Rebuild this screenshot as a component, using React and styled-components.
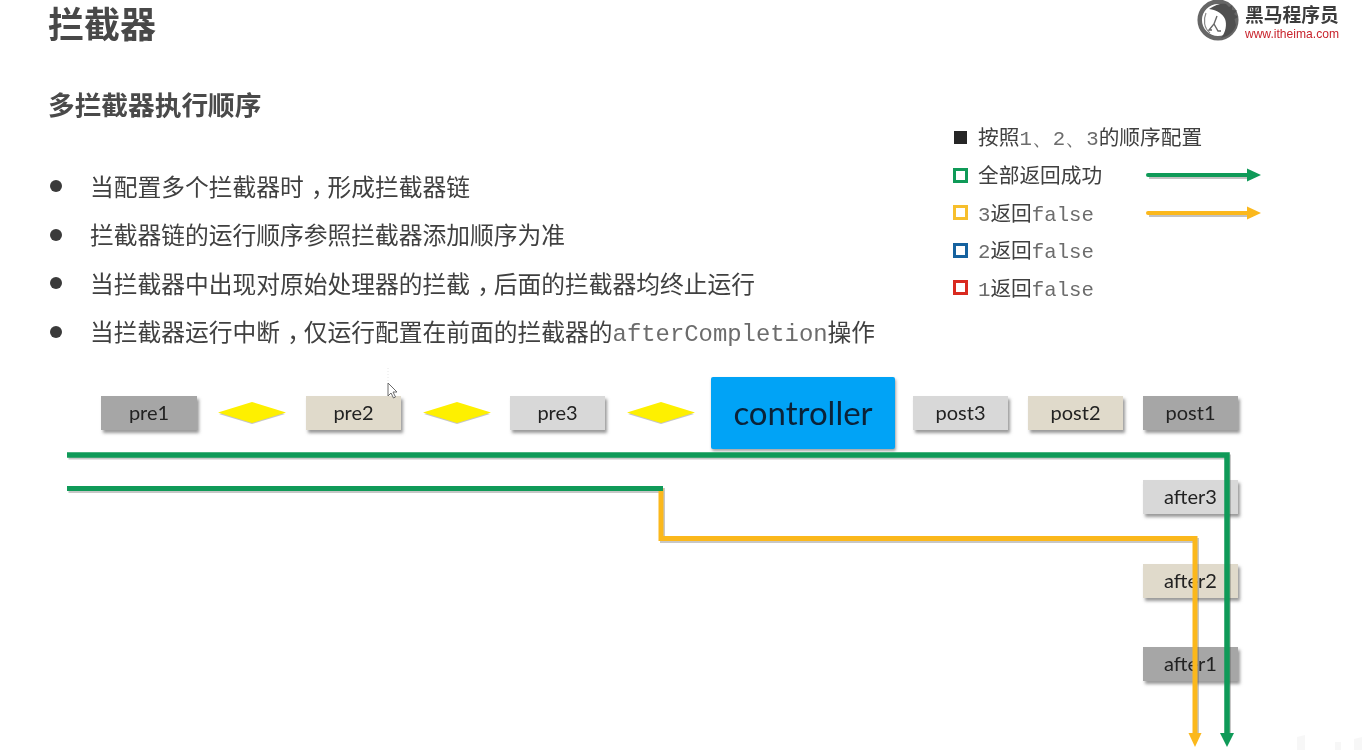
import styled, { createGlobalStyle } from 'styled-components';

const GlobalStyle = createGlobalStyle`
  html, body { margin: 0; padding: 0; background: #fff; }
`;

const CJK = `"Noto Sans CJK SC", "Noto Sans", sans-serif`;
const MONO = `"Liberation Mono", monospace`;
const GREEN = '#0f9a58';
const YELLOW = '#fbb81c';

const Slide = styled.div`
  position: relative;
  width: 1362px;
  height: 750px;
  overflow: hidden;
  background: #fff;
  font-family: ${CJK};
  color: #404040;
  filter: blur(0.45px);
`;

const Header = styled.header`
  display: flex;
  justify-content: space-between;
  align-items: flex-start;
  height: 68px;
  padding: 0 23px 0 48px;
`;

const Title = styled.h1`
  margin: 0;
  font-family: "Liberation Sans", ${CJK};
  font-size: 36px;
  line-height: 52px;
  font-weight: 700;
  color: #484848;
`;

const Logo = styled.div`
  display: flex;
  align-items: flex-start;
  gap: 4px;
  height: 41px;
`;

const LogoText = styled.div`
  display: flex;
  flex-direction: column;
  padding-top: 5px;
`;

const LogoName = styled.span`
  font-family: "Liberation Sans", ${CJK};
  font-size: 18.8px;
  font-weight: 700;
  line-height: 22px;
  color: #3c3c3c;
`;

const LogoUrl = styled.span`
  font-family: "Liberation Sans", sans-serif;
  font-size: 12.1px;
  line-height: 14px;
  color: #c8232c;
`;

const Body = styled.section`
  display: flex;
  justify-content: space-between;
  height: 309px;
  padding: 0 0 0 48px;
`;

const Intro = styled.div`
  display: flex;
  flex-direction: column;
`;

const Subtitle = styled.h2`
  margin: 0 0 27px;
  font-size: 26.7px;
  line-height: 72px;
  font-weight: 700;
  color: #4a4a4a;
`;

const List = styled.ul`
  margin: 0;
  padding: 0;
  list-style: none;
  display: flex;
  flex-direction: column;
  gap: 12.6px;
`;

const Item = styled.li`
  display: flex;
  align-items: center;
  gap: 28px;
  height: 36px;
  font-size: 23.75px;
  white-space: nowrap;
`;

const Dot = styled.i`
  width: 12px;
  height: 12px;
  margin: 2px 0 0 2px;
  border-radius: 50%;
  background: #3a3a3a;
  flex: none;
`;

const Comma = styled.span`
  font-feature-settings: "halt";
  padding: 0 0.2em 0 0.3em;
`;

const Mono = styled.span`
  font-family: ${MONO};
  color: #6c6c6c;
  font-size: ${(p) => p.$size || 23.9}px;
`;

const Legend = styled.div`
  display: flex;
  flex-direction: column;
  width: 409px;
  padding-top: 51px;
`;

const LegendRow = styled.div`
  display: flex;
  align-items: center;
  height: 37.5px;
  font-size: 20.7px;
  white-space: nowrap;
`;

const LegendMark = styled.i`
  box-sizing: border-box;
  width: 15px;
  height: 15px;
  margin-right: 10px;
  flex: none;
  background: ${(p) => (p.$solid ? p.$color : '#fff')};
  border: 3px solid ${(p) => p.$color};
  transform: ${(p) => (p.$solid ? 'scale(0.86)' : 'none')};
`;

const LegendLabel = styled.span`
  width: 168px;
  padding-bottom: 2px;
  flex: none;
`;

const Diagram = styled.section`
  position: relative;
  height: 373px;
`;

const Track = styled.div`
  display: flex;
  align-items: center;
  height: 72px;
  padding-left: 101px;
`;

const Step = styled.div`
  flex: none;
  display: flex;
  align-items: center;
  justify-content: center;
  box-sizing: border-box;
  width: ${(p) => p.$w || 95}px;
  height: 34px;
  padding-bottom: 2px;
  margin-left: ${(p) => p.$gap || 0}px;
  background: ${(p) => p.$bg};
  box-shadow: 2px 3px 3px rgba(70, 70, 70, 0.55);
  font-family: Lato, sans-serif;
  font-size: 20px;
  color: #222;
`;

const Controller = styled.div`
  flex: none;
  display: flex;
  align-items: center;
  justify-content: center;
  box-sizing: border-box;
  width: 184px;
  height: 72px;
  padding-bottom: 2px;
  margin-left: 16px;
  border-radius: 2px;
  background: #01a3f6;
  box-shadow: 1px 2px 3px rgba(70, 70, 70, 0.5);
  font-family: Lato, sans-serif;
  font-size: 33px;
  color: #0b2238;
`;

const Diamond = styled.svg`
  flex: none;
  display: block;
  margin-left: ${(p) => p.$gap}px;
  overflow: visible;
`;

const AfterStack = styled.div`
  display: flex;
  flex-direction: column;
  gap: 49.5px;
  margin: 31px 0 0 1143px;
`;

const Wires = styled.svg`
  position: absolute;
  left: 0;
  top: -377px;
  pointer-events: none;
`;

const Watermark = styled.svg`
  position: absolute;
  right: 0;
  bottom: 0;
`;

const Pointer = styled.svg`
  position: absolute;
  left: 387px;
  top: 382px;
`;

const TONES = { dark: '#a6a6a6', sand: '#e0dacb', light: '#d8d8d8' };

const LEGEND = [
  { color: '#262626', solid: true, label: <>按照<Mono $size={20.7}>1、2、3</Mono>的顺序配置</> },
  { color: GREEN, label: '全部返回成功', arrow: GREEN },
  { color: '#f7bf2c', label: <><Mono $size={20.7}>3</Mono>返回<Mono $size={20.7}>false</Mono></>, arrow: YELLOW },
  { color: '#16629f', label: <><Mono $size={20.7}>2</Mono>返回<Mono $size={20.7}>false</Mono></> },
  { color: '#d92a20', label: <><Mono $size={20.7}>1</Mono>返回<Mono $size={20.7}>false</Mono></> },
];

const BULLETS = [
  <>当配置多个拦截器时<Comma>，</Comma>形成拦截器链</>,
  '拦截器链的运行顺序参照拦截器添加顺序为准',
  <>当拦截器中出现对原始处理器的拦截<Comma>，</Comma>后面的拦截器均终止运行</>,
  <>当拦截器运行中断<Comma>，</Comma>仅运行配置在前面的拦截器的<Mono>afterCompletion</Mono>操作</>,
];

const LegendArrow = ({ color }) => (
  <svg width="118" height="16" viewBox="0 0 118 16">
    <path d="M2 8H106" stroke="rgba(80,80,80,.35)" strokeWidth="4" transform="translate(1 2)" />
    <path d="M2 8H106" stroke={color} strokeWidth="4" strokeLinecap="round" />
    <path d="M101 1.5L115 8L101 14.5Z" fill={color} />
  </svg>
);

const Gem = ({ gap, width = 68 }) => (
  <Diamond $gap={gap} width={width} height="22" viewBox={`0 0 ${width} 22`}>
    <path d={`M1 12L${width / 2} 2L${width - 1} 12L${width / 2} 22Z`} fill="rgba(90,90,90,.35)" />
    <path d={`M0 10.5L${width / 2} 0L${width} 10.5L${width / 2} 21Z`} fill="#fef000" />
  </Diamond>
);

const HorseMark = () => (
  <svg width="44" height="41" viewBox="0 0 44 41">
    <circle cx="21" cy="20" r="18.300" fill="none" stroke="#666" strokeWidth="4.500" />
    <path d="M12 9C19 4 25 3 29 4L32 7L35 5.500L35 10L40 10.500L37 14L41 17L37.500 19L39 25C37 31 33 36 24 38C29 32 30 24 28 19C26 14 20 10 12 9Z" fill="#4f4f4f" />
    <path d="M9 13C6 20 7 28 13 33" fill="none" stroke="#8a8a8a" strokeWidth="1.200" />
    <path d="M20 16L17 24L12 30H15M17 24L21 31H24" fill="none" stroke="#666" strokeWidth="1.400" />
  </svg>
);

const App = () => (
  <>
    <GlobalStyle />
    <Slide>
      <Header>
        <Title>拦截器</Title>
        <Logo>
          <HorseMark />
          <LogoText>
            <LogoName>黑马程序员</LogoName>
            <LogoUrl>www.itheima.com</LogoUrl>
          </LogoText>
        </Logo>
      </Header>
      <Body>
        <Intro>
          <Subtitle>多拦截器执行顺序</Subtitle>
          <List>
            {BULLETS.map((text, i) => (
              <Item key={i}>
                <Dot />
                <span>{text}</span>
              </Item>
            ))}
          </List>
        </Intro>
        <Legend>
          {LEGEND.map((row) => (
            <LegendRow key={row.color}>
              <LegendMark $color={row.color} $solid={row.solid} />
              <LegendLabel>{row.label}</LegendLabel>
              {row.arrow && <LegendArrow color={row.arrow} />}
            </LegendRow>
          ))}
        </Legend>
      </Body>
      <Diagram>
        <Track>
          <Step $bg={TONES.dark} $w={96}>pre1</Step>
          <Gem gap={21} />
          <Step $bg={TONES.sand} $gap={20}>pre2</Step>
          <Gem gap={22} />
          <Step $bg={TONES.light} $gap={19}>pre3</Step>
          <Gem gap={22} />
          <Controller>controller</Controller>
          <Step $bg={TONES.light} $gap={18}>post3</Step>
          <Step $bg={TONES.sand} $gap={20}>post2</Step>
          <Step $bg={TONES.dark} $gap={20}>post1</Step>
        </Track>
        <AfterStack>
          <Step $bg={TONES.light}>after3</Step>
          <Step $bg={TONES.sand}>after2</Step>
          <Step $bg={TONES.dark}>after1</Step>
        </AfterStack>
        <Wires width="1362" height="750" viewBox="0 0 1362 750">
          <path d="M388 368V382" stroke="#e6e6e6" strokeWidth="1" strokeDasharray="1 2" />
          <g fill="none" stroke="rgba(70,70,70,.3)" strokeWidth="5" transform="translate(1.5 2)">
            <path d="M67 455H1227V735" />
            <path d="M67 488.500H661V538.500H1195V735" />
          </g>
          <path d="M661 488.500V538.500H1195V735" fill="none" stroke={YELLOW} strokeWidth="5" />
          <path d="M1188.500 733H1201.500L1195 747Z" fill={YELLOW} />
          <path d="M67 455H1227V735" fill="none" stroke={GREEN} strokeWidth="5.500" />
          <path d="M67 488.500H663" fill="none" stroke={GREEN} strokeWidth="5" />
          <path d="M1220 733H1234L1227 747Z" fill={GREEN} />
        </Wires>
      </Diagram>
      <Pointer width="12" height="18" viewBox="0 0 12 18">
        <path d="M1 1V14L4 11L6.500 16L8.500 15L6 10H10Z" fill="#fff" stroke="#6a6a6a" strokeWidth="1" />
      </Pointer>
      <Watermark width="66" height="15" viewBox="0 0 66 15">
        <path d="M1 15V2L9 0V15ZM39 15V7H45V15ZM58 15V4L66 2V15Z" fill="#f7f7f7" />
      </Watermark>
    </Slide>
  </>
);

export default App;
